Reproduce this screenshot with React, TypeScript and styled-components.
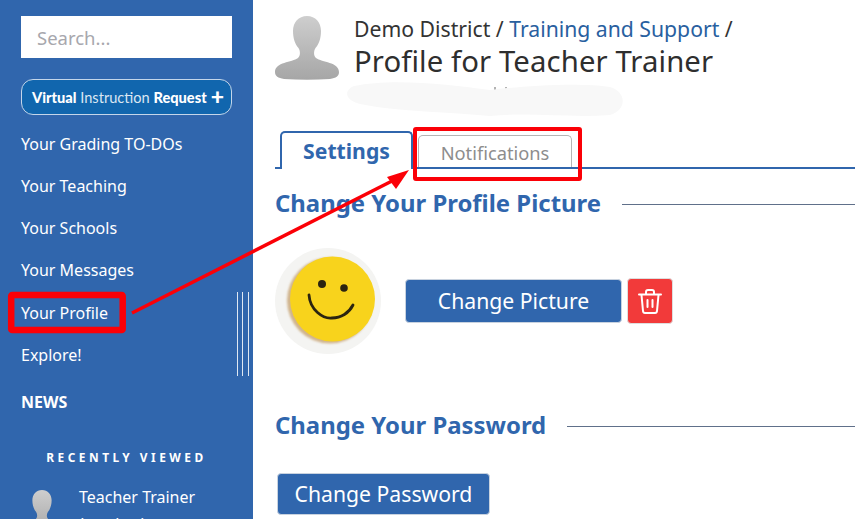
import React from "react";
import styled, { createGlobalStyle } from "styled-components";

const Global = createGlobalStyle`
  html, body { margin: 0; padding: 0; background: #fff; overflow: hidden; }
  body { font-family: "Noto Sans", "Open Sans", sans-serif; }
`;
const Page = styled.div`
  position: relative; display: flex; width: 855px; height: 519px; overflow: hidden; background: #fff;
`;
const Sidebar = styled.aside`
  position: relative; flex: 0 0 253px; background: #3066ad; padding: 16px 21px 0; box-sizing: border-box; color: #fff;
`;
const Search = styled.div`
  height: 42px; width: 211px; background: #fff; color: #a7a7ad; font-size: 18.5px; line-height: 44px; padding-left: 16px; box-sizing: border-box;
`;
const Pill = styled.div`
  margin-top: 21px; height: 36px; width: 211px; box-sizing: border-box; border: 1px solid #c4d6ea; border-radius: 12px; background: #1166ae;
  display: flex; align-items: center; padding-left: 10px; font-family: "Lato", sans-serif; font-size: 14.6px; color: #dbe7f3; white-space: pre;
  b { color: #fff; font-weight: 900; }
`;
const Plus = styled.b`
  font-size: 23px; line-height: 20px; margin-left: 4px; margin-top: -3px;
`;
const Nav = styled.nav`
  margin-top: 7.8px; display: flex; flex-direction: column;
`;
const NavItem = styled.div<{ $bold?: boolean }>`
  height: 42.2px; line-height: 42px; font-size: 16px; font-weight: ${(p) => (p.$bold ? 700 : 400)}; white-space: nowrap;
`;
const News = styled(NavItem)`
  margin-top: 4.7px;
`;
const RecentTitle = styled.div`
  margin-top: 26px; font-size: 11.9px; font-weight: 700; letter-spacing: 3.5px; text-align: center; line-height: 16px; white-space: nowrap;
`;
const RecentRow = styled.div`
  margin-top: 25px; margin-left: -1px; display: flex; gap: 15px;
`;
const RecentText = styled.div`
  font-size: 16px; line-height: 27px; margin-top: -6px; white-space: nowrap;
`;
const Rules = styled.div`
  position: absolute; left: 237px; top: 292px; width: 12px; height: 84px; border-left: 1px solid #dfe8f3; border-right: 1px solid #dfe8f3; box-sizing: border-box;
  &::after { content: ""; position: absolute; left: 4px; top: 0; height: 84px; width: 1px; background: #dfe8f3; }
`;
const Main = styled.main`
  flex: 1; min-width: 0; padding: 16px 0 0 22px; color: #333;
`;
const Header = styled.header`
  display: flex; gap: 15px;
`;
const HeadText = styled.div`
  margin-top: -1px;
`;
const Crumbs = styled.div`
  font-size: 21.2px; line-height: 28px; white-space: nowrap; color: #333;
  a { color: #29609f; }
`;
const Title = styled.h1`
  margin: 0; font-weight: 400; font-size: 29.3px; line-height: 36px; color: #2e2e2e; white-space: nowrap; letter-spacing: 0.1px;
`;
const Tabs = styled.div`
  margin-top: 51px; height: 38px; box-sizing: border-box; border-bottom: 2px solid #3066ad; display: flex; align-items: flex-end; padding-left: 5px; gap: 5px;
`;
const ActiveTab = styled.div`
  width: 133px; height: 38px; box-sizing: border-box; border: 2px solid #3066ad; border-bottom: none; border-radius: 5px 5px 0 0; background: #fff; color: #3066ad;
  font-size: 21.2px; font-weight: 700; text-align: center; line-height: 36px; margin-bottom: -2px;
`;
const Tab = styled.div`
  width: 154px; height: 32px; box-sizing: border-box; border: 1px solid #b5b5b5; border-bottom: none; border-radius: 5px 5px 0 0; color: #8d8d8d; font-size: 18.3px; text-align: center; line-height: 33px;
`;
const SectionHead = styled.div<{ $top: number }>`
  margin-top: ${(p) => p.$top}px; display: flex; align-items: center; gap: 21px; color: #3066ad; font-size: 23.9px; font-weight: 700; line-height: 32px; white-space: nowrap;
  &::after { content: ""; flex: 1; height: 1px; background: #60708a; margin-top: 3px; }
`;
const PicRow = styled.div`
  margin-top: 29px; display: flex; align-items: center;
`;
const Avatar = styled.div`
  width: 106px; height: 106px; border-radius: 50%; background: #f4f4f2; flex: none;
`;
const PrimaryButton = styled.div<{ $w: number; $h: number }>`
  width: ${(p) => p.$w}px; height: ${(p) => p.$h}px; box-sizing: border-box; background: #3066ad; border: 1px solid #c8d2df; border-radius: 4px; color: #fff; font-size: 21.2px; padding-bottom: 2px;
  display: flex; align-items: center; justify-content: center; flex: none;
`;
const PicButton = styled(PrimaryButton)`
  margin-left: 24px;
`;
const DeleteButton = styled.div`
  margin-left: 5px; width: 46px; height: 46px; box-sizing: border-box; background: #f23a3a; border: 1px solid #dedede; border-radius: 4px; color: #fff; display: flex; align-items: center; justify-content: center; flex: none;
`;
const PassButton = styled(PrimaryButton)`
  margin: 32px 0 0 2px;
`;
const Scrawl = styled.svg`
  position: absolute; left: 340px; top: 78px; width: 300px; height: 46px;
`;
const Overlay = styled.svg`
  position: absolute; left: 0; top: 0; width: 855px; height: 519px; pointer-events: none;
`;

const Silhouette = ({ w, id }: { w: number; id: string }) => (
  <svg width={w} height={w} viewBox="0 0 64 64" style={{ flex: "none" }}>
    <defs>
      <linearGradient id={id} x1="0" y1="0" x2="0" y2="1">
        <stop offset="0" stopColor="#cecece" />
        <stop offset="1" stopColor="#a6a6a6" />
      </linearGradient>
    </defs>
    <path
      fill={`url(#${id})`}
      d="M32 0C23.500 0 18 6.500 18 15C18 22 20 28 23.500 32C25.500 35 25.500 40 23 42C17 46.500 0 46 0 56C0 60 3 62 9 63C24 64 40 64 55 63C61 62 64 60 64 56C64 46 47 46.500 41 42C38.500 40 38.500 35 40.500 32C44 28 46 22 46 15C46 6.500 40.500 0 32 0Z"
    />
  </svg>
);

const TrashIcon = () => (
  <svg width="24" height="25" viewBox="0 0 24 25" fill="none" stroke="currentColor" strokeWidth="2" strokeLinecap="round" strokeLinejoin="round">
    <path d="M1 5.500H23" />
    <path d="M8 5V3Q8 1 10 1H14Q16 1 16 3V5" />
    <path d="M3.500 6L5 22Q5.200 24 7 24H17Q18.800 24 19 22L20.500 6" />
    <path d="M9.500 11V18M14.500 11V18" />
  </svg>
);

const Smiley = () => (
  <svg width="106" height="106" viewBox="0 0 106 106">
    <defs>
      <filter id="soft" x="-10%" y="-10%" width="120%" height="120%">
        <feGaussianBlur stdDeviation="1.200" />
      </filter>
    </defs>
    <circle cx="55" cy="52.500" r="43" fill="#b98a4a" opacity="0.6" filter="url(#soft)" />
    <circle cx="57.500" cy="51" r="42.500" fill="#f8d31c" />
    <circle cx="47" cy="36" r="4" fill="#2b2410" />
    <circle cx="69" cy="40" r="3.800" fill="#2b2410" />
    <path d="M34 47C35 62 48 71 57 70C66 70 74 65 78 57" fill="none" stroke="#2b2410" strokeWidth="2.800" strokeLinecap="round" />
  </svg>
);

export default function App() {
  return (
    <Page>
      <Global />
      <Sidebar>
        <Search>Search...</Search>
        <Pill>
          <b>Virtual</b> Instruction <b>Request</b>
          <Plus>+</Plus>
        </Pill>
        <Nav>
          <NavItem>Your Grading TO-DOs</NavItem>
          <NavItem>Your Teaching</NavItem>
          <NavItem>Your Schools</NavItem>
          <NavItem>Your Messages</NavItem>
          <NavItem>Your Profile</NavItem>
          <NavItem>Explore!</NavItem>
          <News $bold>NEWS</News>
        </Nav>
        <RecentTitle>RECENTLY VIEWED</RecentTitle>
        <RecentRow>
          <Silhouette w={44} id="sil-small" />
          <RecentText>
            Teacher Trainer
            <br />
            (teacher)
          </RecentText>
        </RecentRow>
        <Rules />
      </Sidebar>
      <Main>
        <Header>
          <Silhouette w={64} id="sil-large" />
          <HeadText>
            <Crumbs>
              Demo District / <a>Training and Support</a> /
            </Crumbs>
            <Title>Profile for Teacher Trainer</Title>
          </HeadText>
        </Header>
        <Tabs>
          <ActiveTab>Settings</ActiveTab>
          <Tab>Notifications</Tab>
        </Tabs>
        <SectionHead $top={18}>Change Your Profile Picture</SectionHead>
        <PicRow>
          <Avatar>
            <Smiley />
          </Avatar>
          <PicButton $w={217} $h={44}>Change Picture</PicButton>
          <DeleteButton>
            <TrashIcon />
          </DeleteButton>
        </PicRow>
        <SectionHead $top={55}>Change Your Password</SectionHead>
        <PassButton $w={213} $h={42}>Change Password</PassButton>
      </Main>
      <Scrawl viewBox="0 0 300 46">
        <path d="M155 9V14M166 9V14" stroke="#666" strokeWidth="1" />
        <path
          d="M14 8C50 0 110 6 150 12C180 8 240 4 270 9C287 14 287 32 270 37C230 40 190 34 150 38C110 34 60 34 20 26C4 22 4 12 14 8Z"
          fill="#f8f8f8"
        />
      </Scrawl>
      <Overlay viewBox="0 0 855 519">
        <rect x="11.200" y="295" width="111.500" height="35" rx="1" fill="none" stroke="#fb0007" strokeWidth="6.500" />
        <rect x="415" y="129" width="165" height="50" rx="1" fill="none" stroke="#fb0007" strokeWidth="4" />
        <line x1="132" y1="313" x2="392" y2="181" stroke="#fb0007" strokeWidth="3.500" />
        <polygon points="409,170 387,177 396,189" fill="#fb0007" />
      </Overlay>
    </Page>
  );
}
